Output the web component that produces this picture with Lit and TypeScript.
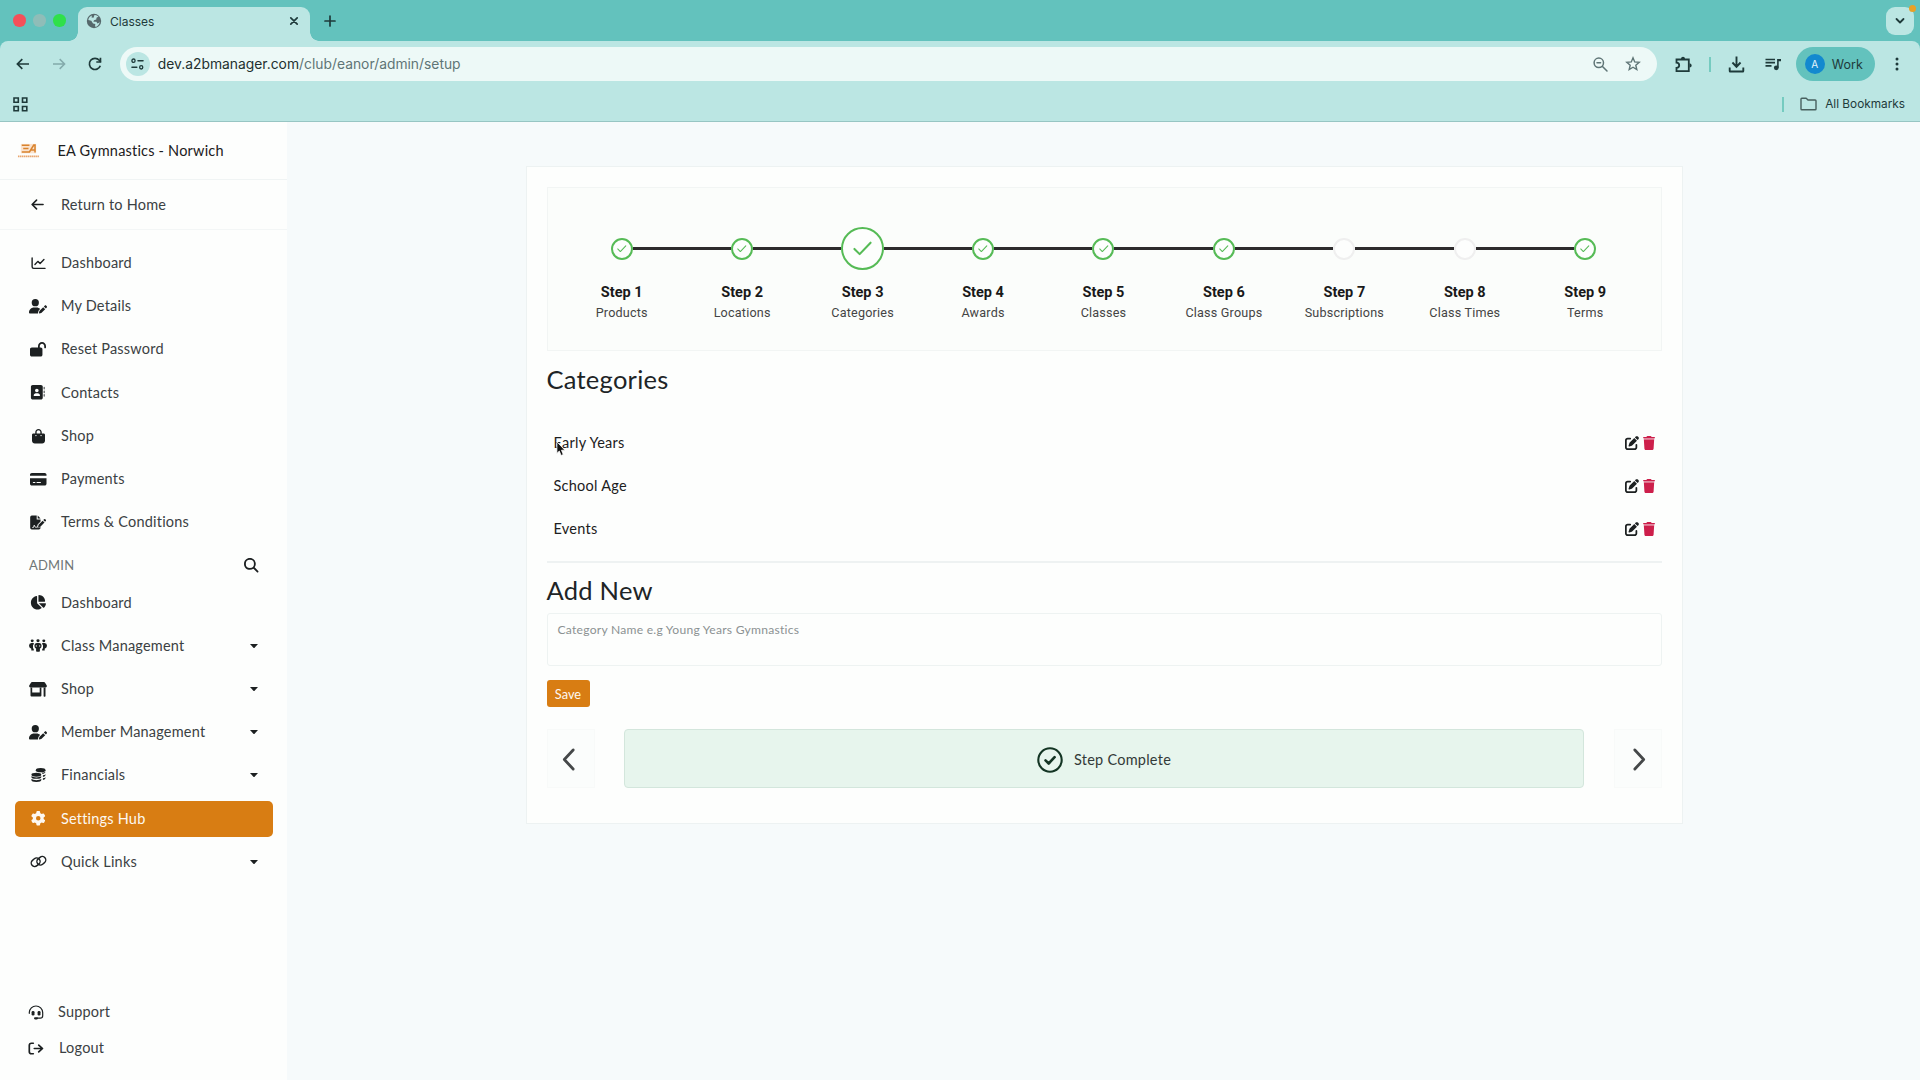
import { LitElement, html, css, svg } from 'lit'
import { customElement } from 'lit/decorators.js'
import { classMap } from 'lit/directives/class-map.js'

const glyphs: Record<string, { box: string; art: unknown }> = {
  chartLine: {
    box: '0 0 16 14',
    art: svg`<path class="s" stroke-width="1.5" d="M1.2 1v9.6q0 1.6 1.6 1.6H15"/><path class="s" stroke-width="1.5" d="M4.2 8 7.3 4.7 9.7 6.9 13.8 2.7"/>`,
  },
  userPen: {
    box: '0 0 640 512',
    art: svg`<path d="M224 256A128 128 0 1 0 224 0a128 128 0 1 0 0 256zm-45.7 48C79.8 304 0 383.8 0 482.3C0 498.7 13.3 512 29.7 512H322.8c-3.1-8.8-3.7-18.4-1.4-27.8l15-60.1c2.8-11.3 8.6-21.5 16.8-29.7l40.3-40.3c-32.1-31-75.7-50.1-123.9-50.1H178.3zm435.5-68.3c-15.6-15.6-40.9-15.6-56.6 0l-29.4 29.4 71 71 29.4-29.4c15.6-15.6 15.6-40.9 0-56.6l-14.4-14.4zM375.9 417c-4.1 4.1-7 9.2-8.4 14.9l-15 60.1c-1.4 5.5 .2 11.2 4.2 15.2s9.7 5.6 15.2 4.2l60.1-15c5.6-1.4 10.8-4.3 14.9-8.4L576.1 358.7l-71-71L375.9 417z"/>`,
  },
  lockOpen: {
    box: '0 0 576 512',
    art: svg`<path d="M352 144c0-44.2 35.8-80 80-80s80 35.8 80 80v48c0 17.7 14.3 32 32 32s32-14.3 32-32V144C576 64.5 511.5 0 432 0S288 64.5 288 144v48H64c-35.3 0-64 28.7-64 64V448c0 35.3 28.7 64 64 64H384c35.3 0 64-28.7 64-64V256c0-35.3-28.7-64-64-64H352V144z"/>`,
  },
  addressBook: {
    box: '0 0 544 512',
    art: svg`<path d="M96 0C60.7 0 32 28.7 32 64V448c0 35.3 28.7 64 64 64H384c35.3 0 64-28.7 64-64V64c0-35.3-28.7-64-64-64H96zM208 288h64c44.2 0 80 35.8 80 80c0 8.8-7.2 16-16 16H144c-8.8 0-16-7.2-16-16c0-44.2 35.8-80 80-80zm-32-96a64 64 0 1 1 128 0 64 64 0 1 1-128 0zM512 80c0-8.8-7.2-16-16-16s-16 7.2-16 16v64c0 8.8 7.2 16 16 16s16-7.2 16-16V80zM496 192c-8.8 0-16 7.2-16 16v64c0 8.8 7.2 16 16 16s16-7.2 16-16V208c0-8.8-7.2-16-16-16zm16 144c0-8.8-7.2-16-16-16s-16 7.2-16 16v64c0 8.8 7.2 16 16 16s16-7.2 16-16V336z"/>`,
  },
  bag: {
    box: '0 0 448 512',
    art: svg`<path d="M160 112c0-35.3 28.7-64 64-64s64 28.7 64 64v48H160V112zm-48 48H48c-26.5 0-48 21.5-48 48V416c0 53 43 96 96 96H352c53 0 96-43 96-96V208c0-26.5-21.5-48-48-48H336V112C336 50.1 285.9 0 224 0S112 50.1 112 112v48zm24 48a24 24 0 1 1 0 48 24 24 0 1 1 0-48zm152 24a24 24 0 1 1 48 0 24 24 0 1 1-48 0z"/>`,
  },
  card: {
    box: '0 0 576 512',
    art: svg`<path d="M64 32C28.7 32 0 60.7 0 96v32H576V96c0-35.3-28.7-64-64-64H64zM576 224H0V416c0 35.3 28.7 64 64 64H512c35.3 0 64-28.7 64-64V224zM112 352h64c8.8 0 16 7.2 16 16s-7.2 16-16 16H112c-8.8 0-16-7.2-16-16s7.2-16 16-16zm112 16c0-8.8 7.2-16 16-16H368c8.8 0 16 7.2 16 16s-7.2 16-16 16H240c-8.8 0-16-7.2-16-16z"/>`,
  },
  fileSign: {
    box: '0 0 18 16',
    art: svg`<path d="M2 .5h5.3v4.2h4.2v2.2L8.3 10.2 7.6 13.3l3.9-.3v.6q0 1.9-1.9 1.9H2Q.2 15.5.2 13.7V2.3Q.2.5 2 .5z"/><path d="M8.4.5 11.5 3.7H8.4z"/><path d="m9.3 10.5 4.5-4.5 2 2-4.5 4.5-2.5.6z"/><path d="m14.5 5.3.8-.8q.7-.7 1.4 0l.5.5q.7.7 0 1.4l-.8.8z"/><path stroke="#fdfefd" stroke-width=".9" fill="none" d="M2.5 13.3h1.3l.8-2.5 1.1 2.2h2"/>`,
  },
  search: {
    box: '0 0 512 512',
    art: svg`<path d="M416 208c0 45.9-14.9 88.3-40 122.7L502.6 457.4c12.5 12.5 12.5 32.8 0 45.3s-32.8 12.5-45.3 0L330.7 376c-34.4 25.2-76.8 40-122.7 40C93.1 416 0 322.9 0 208S93.1 0 208 0S416 93.1 416 208zM208 352a144 144 0 1 0 0-288 144 144 0 1 0 0 288z"/>`,
  },
  pie: {
    box: '0 0 576 512',
    art: svg`<path d="M304 240V16.6c0-9 7-16.6 16-16.6C443.7 0 544 100.3 544 224c0 9-7.6 16-16.6 16H304zM32 272C32 150.7 122.1 50.3 239 34.3c9.2-1.3 17 6.1 17 15.4V288L412.5 444.5c6.7 6.7 6.2 17.7-1.5 23.1C371.8 495.6 323.8 512 272 512C139.5 512 32 404.6 32 272zm526.4 16c9.3 0 16.6 7.8 15.4 17c-7.7 55.9-34.6 105.6-73.9 142.3c-6 5.6-15.4 5.2-21.2-.7L320 288H558.4z"/>`,
  },
  people: {
    box: '0 0 18 14',
    art: svg`<circle cx="3.2" cy="2" r="1.5"/><circle cx="9" cy="2" r="1.6"/><circle cx="14.8" cy="2" r="1.5"/><path d="M2.5 4.3h1.7q.8.1.8.9l-1 1.6v3l.8 1.2v1.5H2.3v-2.1Q0 9.5 0 7.3 0 4.5 2.5 4.3zM15.5 4.3h-1.7q-.8.1-.8.9l1 1.6v3l-.8 1.2v1.5h2.5v-2.1Q18 9.5 18 7.3 18 4.5 15.5 4.3z"/><path d="M7.7 4.3h2.6q2.3.3 2.3 3 0 2-1.7 3.1V13q0 .8-.8.8H7.9q-.8 0-.8-.8v-2.6Q5.4 9.3 5.4 7.3q0-2.7 2.3-3z"/><path stroke="#fdfefd" stroke-width=".7" fill="none" d="M7.3 6.5v2M10.7 6.5v2"/>`,
  },
  store: {
    box: '0 0 18 15',
    art: svg`<path d="M3 0h12q.6 0 .9.5L17.8 3.6Q18.3 5.4 16.5 5.6H1.5Q-.3 5.4.2 3.6L2.1.5Q2.4 0 3 0z"/><path d="M1.5 5.5h1.7v5h7.5v-5h1.7v8q0 1-1 1H2.5q-1 0-1-1zM14.6 5.5h1.9V14q0 .7-.7.7h-.5q-.7 0-.7-.7z"/>`,
  },
  coins: {
    box: '0 0 16 15',
    art: svg`<ellipse cx="10.3" cy="2.2" rx="5.2" ry="2.2"/><path d="M15.5 4q0 1.5-2.8 2.2l-1.5-1.3Q14.3 4.9 15.5 4zM15.5 7.2q0 1.4-2.8 2V7.6q2-.4 2.8-1.2zM15.5 10.3q0 1.4-2.8 2v-1.6q2-.4 2.8-1.2z"/><ellipse cx="5.7" cy="7" rx="5.3" ry="2"/><path d="M.4 8.6q1.7 1.2 5.3 1.2T11 8.6v.7q0 1.9-5.3 1.9T.4 9.3zM.4 11.5q1.7 1.2 5.3 1.2t5.3-1.2v1q0 2-5.3 2t-5.3-2z"/>`,
  },
  gear: {
    box: '0 0 512 512',
    art: svg`<path d="M495.9 166.6c3.2 8.7 .5 18.4-6.4 24.6l-43.3 39.4c1.1 8.3 1.7 16.8 1.7 25.4s-.6 17.1-1.7 25.4l43.3 39.4c6.9 6.2 9.6 15.9 6.4 24.6c-4.4 11.9-9.7 23.3-15.8 34.3l-4.7 8.1c-6.6 11-14 21.4-22.1 31.2c-5.9 7.2-15.7 9.6-24.5 6.8l-55.7-17.7c-13.4 10.3-28.2 18.9-44 25.4l-12.5 57.1c-2 9.1-9 16.3-18.2 17.8c-13.8 2.3-28 3.5-42.5 3.5s-28.7-1.2-42.5-3.5c-9.2-1.5-16.2-8.7-18.2-17.8l-12.5-57.1c-15.8-6.5-30.6-15.1-44-25.4L83.1 425.9c-8.8 2.8-18.6 .3-24.5-6.8c-8.1-9.8-15.5-20.2-22.1-31.2l-4.7-8.1c-6.1-11-11.4-22.4-15.8-34.3c-3.2-8.7-.5-18.4 6.4-24.6l43.3-39.4C64.6 273.1 64 264.6 64 256s.6-17.1 1.7-25.4L22.4 191.2c-6.9-6.2-9.6-15.9-6.4-24.6c4.4-11.9 9.7-23.3 15.8-34.3l4.7-8.1c6.6-11 14-21.4 22.1-31.2c5.9-7.2 15.7-9.6 24.5-6.8l55.7 17.7c13.4-10.3 28.2-18.9 44-25.4l12.5-57.1c2-9.1 9-16.3 18.2-17.8C227.3 1.2 241.5 0 256 0s28.7 1.2 42.5 3.5c9.2 1.5 16.2 8.7 18.2 17.8l12.5 57.1c15.8 6.5 30.6 15.1 44 25.4l55.7-17.7c8.8-2.8 18.6-.3 24.5 6.8c8.1 9.8 15.5 20.2 22.1 31.2l4.7 8.1c6.1 11 11.4 22.4 15.8 34.3zM256 336a80 80 0 1 0 0-160 80 80 0 1 0 0 160z"/>`,
  },
  link: {
    box: '0 0 18 14',
    art: svg`<rect class="s" stroke-width="1.5" x="1" y="4.1" width="10" height="7.4" rx="3.7" transform="rotate(-40 6 7.8)"/><rect class="s" stroke-width="1.5" x="7" y="2.5" width="10" height="7.4" rx="3.7" transform="rotate(-40 12 6.2)"/>`,
  },
  headset: {
    box: '0 0 16 15',
    art: svg`<path class="s" stroke-width="1.2" d="M1.3 8.3V7.5A6.7 6.7 0 0 1 8 1a6.7 6.7 0 0 1 6.7 6.5v3.3q0 2.4-2.4 2.4H9"/><rect x="3.6" y="6" width="2.9" height="4.6" rx="1.3"/><rect x="9.6" y="6" width="2.9" height="4.6" rx="1.3"/><rect x="6" y="12.2" width="4" height="2.2" rx="1.1"/>`,
  },
  logout: {
    box: '0 0 16 14',
    art: svg`<path class="s" stroke-width="1.7" d="M5.3 1.3H3.5Q1.3 1.3 1.3 3.5v7q0 2.2 2.2 2.2h1.8M6.3 7h8M10.7 3.3 14.5 7l-3.8 3.7"/>`,
  },
  arrowLeft: {
    box: '0 0 14 12',
    art: svg`<path class="s" stroke-width="1.7" d="M13 6H1.3M6 1.2 1.2 6 6 10.8"/>`,
  },
  edit: {
    box: '0 0 512 512',
    art: svg`<path d="M471.6 21.7c-21.9-21.9-57.3-21.9-79.2 0L362.3 51.7l97.9 97.9 30.1-30.1c21.9-21.9 21.9-57.3 0-79.2L471.6 21.7zm-299.2 220c-6.1 6.1-10.8 13.6-13.5 21.9l-29.6 88.8c-2.9 8.6-.6 18.1 5.8 24.6s15.9 8.7 24.6 5.8l88.8-29.6c8.2-2.7 15.7-7.4 21.9-13.5L437.7 172.3 339.7 74.3 172.4 241.7zM96 64C43 64 0 107 0 160V416c0 53 43 96 96 96H352c53 0 96-43 96-96V320c0-17.7-14.3-32-32-32s-32 14.3-32 32v96c0 17.7-14.3 32-32 32H96c-17.7 0-32-14.3-32-32V160c0-17.7 14.3-32 32-32h96c17.7 0 32-14.3 32-32s-14.3-32-32-32H96z"/>`,
  },
  trash: {
    box: '0 0 448 512',
    art: svg`<path d="M135.2 17.7L128 32H32C14.3 32 0 46.3 0 64S14.3 80 32 80H416c17.7 0 32 0 32-16s-14.3-32-32-32H320l-7.2-14.3C307.4 6.8 296.3 0 284.2 0H163.8c-12.1 0-23.2 6.8-28.6 17.7z"/><path opacity=".45" d="M28 80H420V130H28z"/><path d="M416 128H32L53.2 467c1.6 25.3 22.6 45 47.9 45H346.9c25.3 0 46.3-19.7 47.9-45L416 128z"/>`,
  },
  check: { box: '0 0 20 16', art: svg`<path class="s" stroke-width="2.2" d="M1.5 8.5 7 14 18.5 1.8"/>` },
  doneCircle: {
    box: '0 0 26 26',
    art: svg`<circle class="s" stroke-width="2.1" cx="13" cy="13" r="11.7"/><path class="s" stroke-width="2.6" d="m8.5 13.3 3.2 3.2 5.9-6.3"/>`,
  },
  chevronLeft: { box: '0 0 14 24', art: svg`<path class="s" stroke-width="3" d="M12 2 2.5 12 12 22"/>` },
  chevronRight: { box: '0 0 14 24', art: svg`<path class="s" stroke-width="3" d="M2 2 11.5 12 2 22"/>` },
  chevronDown: { box: '0 0 10 6', art: svg`<path class="s" stroke-width="1.8" d="M1.5 1 5 4.5 8.5 1"/>` },
  caret: { box: '0 0 8 4', art: svg`<path d="M0 0h8L4.6 3.7q-.6.5-1.2 0z"/>` },
  globe: {
    box: '0 0 16 16',
    art: svg`<circle cx="8" cy="8" r="7.2"/><path fill="#bbe6e3" d="M8.5 2.1q2.3-.2 4 1.5L10.5 4.7 10.3 6.6 8 7.2 7.4 8.8h3l1 1.8q2-.4 2.3-2-.2 3.6-3.4 5.1l-1.3-.2.3-2.5L7 10.5 5.3 7.7 2.3 7Q2.7 3.5 6 2.4l-.5 2 2 .3z"/>`,
  },
  close: { box: '0 0 10 10', art: svg`<path class="s" stroke-width="1.7" d="m1.8 1.8 6.4 6.4M8.2 1.8 1.8 8.2"/>` },
  plus: { box: '0 0 12 12', art: svg`<path class="s" stroke-width="1.7" d="M6 1v10M1 6h10"/>` },
  back: { box: '0 0 14 12', art: svg`<path class="s sq" stroke-width="1.7" d="M13 6H1.6M6.3 1.1 1.4 6l4.9 4.9"/>` },
  forward: { box: '0 0 14 12', art: svg`<path class="s sq" stroke-width="1.5" d="M1 6h11.4M7.7 1.1 12.6 6l-4.9 4.9"/>` },
  reload: {
    box: '0 0 14 14',
    art: svg`<path class="s sq" stroke-width="1.7" d="M12.3 8.7A5.6 5.6 0 1 1 11.3 3.3L12.7 4.9"/><path d="M13.3.8v5H8.3V4.2h3.3V.8z"/>`,
  },
  tune: {
    box: '0 0 14 12',
    art: svg`<circle class="s" stroke-width="1.4" cx="2.7" cy="2.7" r="1.7"/><path class="s" stroke-width="1.5" d="M7.5 2.7h5.5M1 9.3h5.3"/><circle class="s" stroke-width="1.4" cx="11" cy="9.3" r="1.7"/>`,
  },
  apps: {
    box: '0 0 15 15',
    art: svg`<path class="s sq" stroke-width="1.6" d="M1 1h4.3v4.3H1zM9.5 1h4.3v4.3H9.5zM1 9.5h4.3v4.3H1zM9.5 9.5h4.3v4.3H9.5z"/>`,
  },
  zoomOut: {
    box: '0 0 15 15',
    art: svg`<circle class="s" stroke-width="1.5" cx="5.8" cy="5.8" r="4.7"/><path class="s" stroke-width="1.5" d="m9.5 9.5 4.5 4.5M4 5.8h3.6"/>`,
  },
  star: {
    box: '0 0 16 16',
    art: svg`<path class="s sq" stroke-width="1.4" d="m8 1.8 1.7 4.1 4.5.4-3.4 2.9 1 4.3L8 11.2l-3.8 2.3 1-4.3L1.8 6.3l4.5-.4z"/>`,
  },
  puzzle: {
    box: '0 0 18 17',
    art: svg`<path class="s sq" stroke-width="1.8" d="M1.5 3.5h12.3v11.7H1.5v-3.4Q4.2 11.5 4.2 9.2T1.5 6.6z"/><path d="M5.9 3Q6.1.8 8 .8T10.1 3zM14.5 7.2q2.2.2 2.2 2.2t-2.2 2.2z"/>`,
  },
  download: {
    box: '0 0 18 17',
    art: svg`<path class="s sq" stroke-width="2" d="M9 .5v9.7M4.7 6.5 9 10.8l4.3-4.3M1.8 11.5V15q0 .5.5.5h13.4q.5 0 .5-.5v-3.5"/>`,
  },
  playlist: {
    box: '0 0 17 13',
    art: svg`<path class="s sq" stroke-width="1.7" d="M.5 1.5h9.5M.5 4.7h9.5M.5 7.9h6"/><circle cx="11.3" cy="9.8" r="2.4"/><path d="M12.1 1h3.9v2.2h-2.3v6.6h-1.6z"/>`,
  },
  dots: { box: '0 0 4 14', art: svg`<circle cx="2" cy="2" r="1.5"/><circle cx="2" cy="7" r="1.5"/><circle cx="2" cy="12" r="1.5"/>` },
  folder: {
    box: '0 0 17 14',
    art: svg`<path class="s" stroke-width="1.4" d="M1.8 1.2h4.4L8 3h7.2q.8 0 .8.8v8.1q0 .8-.8.8H1.8q-.8 0-.8-.8V2q0-.8.8-.8z"/>`,
  },
  pointer: {
    box: '0 0 12 17',
    art: svg`<path fill="#111" stroke="#fff" stroke-width=".9" d="M1 .8v12.4l2.8-2.5 2 4.7 2.5-1-2-4.6h3.9z"/>`,
  },
  clubLogo: {
    box: '0 0 24 18',
    art: svg`<path fill="#fbe3cd" d="M4 2h16v10H4z"/><path fill="none" stroke="#d9842f" stroke-width="1.6" d="M5 3.5h8M6.5 7H12M5 10.6h8L17.5 3.3h1.3V11M15 8.5h3.5"/><path stroke="#e9a56d" stroke-width="1.7" stroke-dasharray="1.6 .5" d="M1 15.2h22"/>`,
  },
}

const icon = (name: string, w: number, h: number) =>
  html`<svg width=${w} height=${h} viewBox=${glyphs[name].box} preserveAspectRatio="none" aria-hidden="true">${glyphs[name].art}</svg>`

const shared = css`
  :host,
  * {
    box-sizing: border-box;
  }

  svg {
    display: block;
    flex: none;
    fill: currentColor;
    overflow: visible;
  }

  .s {
    fill: none;
    stroke: currentColor;
    stroke-linecap: round;
    stroke-linejoin: round;
  }

  .sq {
    stroke-linecap: butt;
    stroke-linejoin: miter;
  }
`

@customElement('browser-frame')
class BrowserFrame extends LitElement {
  static styles = [
    shared,
    css`
      :host {
        display: block;
        height: 122px;
        background: #63c2bd;
        border-bottom: 1px solid #97c5c3;
        color: #1e3a3a;
        font-family: Inter, sans-serif;
      }

      .strip {
        display: flex;
        height: 41px;
        padding: 0 6px 0 13px;
      }

      .lights {
        display: flex;
        align-items: center;
        gap: 7.6px;
        width: 65px;
      }

      .light {
        width: 12.5px;
        height: 12.5px;
        border-radius: 50%;
        background: #f4505a;
      }

      .light.idle {
        background: #8fbdb8;
      }

      .light.go {
        background: #2fe04a;
      }

      .tab {
        position: relative;
        display: flex;
        align-items: center;
        width: 232px;
        height: 34px;
        margin-top: 7px;
        padding: 0 11px 6px 8px;
        border-radius: 9px 9px 0 0;
        background: #bbe6e3;
        font-size: 12px;
      }

      .tab::before,
      .tab::after {
        content: '';
        position: absolute;
        bottom: 0;
        width: 9px;
        height: 9px;
      }

      .tab::before {
        left: -9px;
        background: radial-gradient(circle at 0 0, transparent 8.5px, #bbe6e3 9px);
      }

      .tab::after {
        right: -9px;
        background: radial-gradient(circle at 100% 0, transparent 8.5px, #bbe6e3 9px);
      }

      .favicon {
        color: #56696c;
      }

      .tab-title {
        flex: 1;
        margin-left: 8px;
      }

      .new-tab {
        display: flex;
        align-items: center;
        margin: 0 auto 0 14px;
      }

      .tab-search {
        position: relative;
        display: grid;
        place-items: center;
        width: 28px;
        height: 28px;
        margin-top: 7px;
        border-radius: 9px;
        background: #bbe6e3;
      }

      .tab-search::after {
        content: '';
        position: absolute;
        top: -2px;
        right: -2px;
        width: 7px;
        height: 7px;
        border-radius: 50%;
        background: #e9a126;
      }

      .tools {
        display: flex;
        align-items: center;
        height: 46px;
        padding: 0 21px 0 16px;
        border-radius: 8px 8px 0 0;
        background: #bbe6e3;
      }

      .nav {
        display: flex;
        align-items: center;
        width: 105px;
        gap: 22px;
      }

      .off {
        color: #83aaab;
      }

      .address {
        display: flex;
        align-items: center;
        flex: none;
        width: 1537px;
        height: 34px;
        padding: 0 16px 0 5px;
        border-radius: 17px;
        background: #edf9f7;
        color: #5f7576;
      }

      .info {
        display: grid;
        place-items: center;
        width: 24px;
        height: 24px;
        margin-left: 1px;
        border-radius: 50%;
        background: #bbe6e3;
        color: #1e3a3a;
      }

      .url {
        flex: 1;
        margin-left: 8px;
        font-size: 13.85px;
        line-height: 20px;
      }

      .host {
        color: #22302f;
      }

      .address .star {
        margin-left: 17px;
      }

      .ext {
        margin-left: 18px;
      }

      .divider {
        width: 2px;
        height: 15px;
        background: #75cbc0;
      }

      .ext + .divider {
        margin: 0 17px 0 16px;
      }

      .list {
        margin: 0 14px 0 20px;
      }

      .profile {
        display: flex;
        align-items: center;
        gap: 7px;
        width: 80px;
        height: 34px;
        padding-left: 9px;
        margin-right: 20px;
        border-radius: 17px;
        background: #63c2bd;
        font-size: 12.5px;
      }

      .avatar {
        width: 20px;
        border-radius: 50%;
        background: #1389cf;
        color: #e6f5fb;
        font-size: 10px;
        line-height: 20px;
        text-align: center;
      }

      .marks {
        display: flex;
        align-items: center;
        height: 34px;
        padding: 0 15px 0 12.5px;
        background: #bbe6e3;
        font-size: 11.8px;
      }

      .marks .divider {
        margin: 0 16px 0 auto;
      }

      .folder {
        margin-right: 8px;
        color: #48605f;
      }
    `,
  ]

  render() {
    return html`
      <div class="strip">
        <div class="lights">
          <span class="light"></span>
          <span class="light idle"></span>
          <span class="light go"></span>
        </div>
        <div class="tab">
          <span class="favicon">${icon('globe', 16, 16)}</span>
          <span class="tab-title">Classes</span>
          ${icon('close', 10, 10)}
        </div>
        <div class="new-tab">${icon('plus', 12, 12)}</div>
        <div class="tab-search">${icon('chevronDown', 10, 6)}</div>
      </div>
      <div class="tools">
        <div class="nav">
          ${icon('back', 14, 12)}
          <span class="off">${icon('forward', 14, 12)}</span>
          ${icon('reload', 14, 14)}
        </div>
        <div class="address">
          <span class="info">${icon('tune', 13, 12)}</span>
          <span class="url"><span class="host">dev.a2bmanager.com</span>/club/eanor/admin/setup</span>
          ${icon('zoomOut', 15, 15)}
          <span class="star">${icon('star', 16, 16)}</span>
        </div>
        <span class="ext">${icon('puzzle', 18, 17)}</span>
        <span class="divider"></span>
        ${icon('download', 17, 17)}
        <span class="list">${icon('playlist', 17, 13)}</span>
        <div class="profile"><span class="avatar">A</span>Work</div>
        ${icon('dots', 4, 14)}
      </div>
      <div class="marks">
        ${icon('apps', 15, 15)}
        <span class="divider"></span>
        <span class="folder">${icon('folder', 17, 14)}</span>
        All Bookmarks
      </div>
    `
  }
}

interface NavItem {
  label: string
  glyph: string
  size: [number, number]
  menu?: boolean
  active?: boolean
}

const memberLinks: NavItem[] = [
  { label: 'Dashboard', glyph: 'chartLine', size: [15, 13] },
  { label: 'My Details', glyph: 'userPen', size: [18, 14.5] },
  { label: 'Reset Password', glyph: 'lockOpen', size: [16, 14.5] },
  { label: 'Contacts', glyph: 'addressBook', size: [15.5, 14.5] },
  { label: 'Shop', glyph: 'bag', size: [13, 14.5] },
  { label: 'Payments', glyph: 'card', size: [16.5, 14.5] },
  { label: 'Terms & Conditions', glyph: 'fileSign', size: [16.5, 15] },
]

const adminLinks: NavItem[] = [
  { label: 'Dashboard', glyph: 'pie', size: [16, 14.5] },
  { label: 'Class Management', glyph: 'people', size: [18, 13], menu: true },
  { label: 'Shop', glyph: 'store', size: [18, 15], menu: true },
  { label: 'Member Management', glyph: 'userPen', size: [18, 14.5], menu: true },
  { label: 'Financials', glyph: 'coins', size: [15, 14.5], menu: true },
  { label: 'Settings Hub', glyph: 'gear', size: [14.5, 14.5], active: true },
  { label: 'Quick Links', glyph: 'link', size: [17, 13], menu: true },
]

@customElement('side-nav')
class SideNav extends LitElement {
  static styles = [
    shared,
    css`
      :host {
        display: flex;
        flex-direction: column;
        width: 287px;
        background: #fdfefd;
        color: #1c2021;
        font: 14.5px/20px Lato, sans-serif;
        letter-spacing: 0.2px;
      }

      .club {
        display: flex;
        align-items: center;
        gap: 17.5px;
        height: 58px;
        padding-left: 17px;
        border-bottom: 1px solid #f0f4f4;
      }

      .home {
        display: flex;
        align-items: center;
        gap: 17px;
        height: 50px;
        padding-left: 31px;
        border-bottom: 1px solid #f3f6f6;
      }

      .label {
        color: #3b4143;
      }

      .links {
        padding: 15px 14px 0 15px;
      }

      .item {
        display: flex;
        align-items: center;
        height: 36px;
        margin-bottom: 7.2px;
        padding: 0 15px 0 14px;
        border-radius: 5px;
      }

      .item .label {
        flex: 1;
      }

      .slot {
        display: flex;
        justify-content: center;
        width: 18px;
        margin-right: 14px;
      }

      .active {
        background: #d87d13;
        color: #fdf8f1;
      }

      .active .label {
        color: inherit;
      }

      .group {
        display: flex;
        align-items: center;
        justify-content: space-between;
        height: 37.4px;
        padding: 0 15px 2px 14px;
        color: #6f7677;
        font-size: 13px;
      }

      .group svg {
        color: #1c2021;
      }

      .footer {
        display: flex;
        flex-direction: column;
        margin-top: auto;
        padding: 0 0 14px 28px;
      }

      .footer .row {
        display: flex;
        align-items: center;
        height: 36px;
        gap: 14px;
      }

      .footer .row + .row .label {
        margin-left: 1px;
      }
    `,
  ]

  private renderItem(item: NavItem) {
    return html`
      <div class=${classMap({ item: true, active: !!item.active })}>
        <span class="slot">${icon(item.glyph, ...item.size)}</span>
        <span class="label">${item.label}</span>
        ${item.menu ? icon('caret', 8, 4) : ''}
      </div>
    `
  }

  render() {
    return html`
      <div class="club">${icon('clubLogo', 23, 17)}<span>EA Gymnastics - Norwich</span></div>
      <div class="home">${icon('arrowLeft', 13, 11)}<span class="label">Return to Home</span></div>
      <div class="links">
        ${memberLinks.map((item) => this.renderItem(item))}
        <div class="group"><span>ADMIN</span>${icon('search', 14.5, 14.5)}</div>
        ${adminLinks.map((item) => this.renderItem(item))}
      </div>
      <div class="footer">
        <div class="row">${icon('headset', 16, 15)}<span class="label">Support</span></div>
        <div class="row">${icon('logout', 16, 13)}<span class="label">Logout</span></div>
      </div>
    `
  }
}

interface Step {
  label: string
  done: boolean
  current?: boolean
}

const steps: Step[] = [
  { label: 'Products', done: true },
  { label: 'Locations', done: true },
  { label: 'Categories', done: true, current: true },
  { label: 'Awards', done: true },
  { label: 'Classes', done: true },
  { label: 'Class Groups', done: true },
  { label: 'Subscriptions', done: false },
  { label: 'Class Times', done: false },
  { label: 'Terms', done: true },
]

@customElement('step-track')
class StepTrack extends LitElement {
  static styles = [
    shared,
    css`
      :host {
        display: flex;
        height: 164px;
        padding: 39px 15px 0 14px;
        border: 1px solid #f2f5f4;
        background: #fbfdfb;
        font-family: Roboto, sans-serif;
        letter-spacing: 0;
        text-align: center;
      }

      .step {
        flex: 1;
      }

      .rail {
        display: flex;
        align-items: center;
        height: 43px;
      }

      .line {
        flex: 1;
        height: 3px;
        background: #2d2b2c;
      }

      .step:first-child .line:first-child,
      .step:last-child .line:last-child {
        background: transparent;
      }

      .dot {
        display: grid;
        place-items: center;
        width: 22px;
        height: 22px;
        border: 2px solid #efefef;
        border-radius: 50%;
        background: #fdfefd;
        color: #56bb56;
      }

      .done {
        border-color: #56bb56;
      }

      .current {
        width: 43px;
        height: 43px;
      }

      .name {
        margin-top: 14px;
        color: #191919;
        font-size: 14.5px;
        font-weight: 700;
        line-height: 18px;
      }

      .label {
        margin-top: 2px;
        color: #444;
        font-size: 12.6px;
        line-height: 18px;
        letter-spacing: 0.2px;
      }
    `,
  ]

  render() {
    return steps.map(
      (step, i) => html`
        <div class="step">
          <div class="rail">
            <span class="line"></span>
            <span class=${classMap({ dot: true, done: step.done, current: !!step.current })}>
              ${step.done ? (step.current ? icon('check', 19, 15) : icon('check', 9.5, 7.5)) : ''}
            </span>
            <span class="line"></span>
          </div>
          <div class="name">Step ${i + 1}</div>
          <div class="label">${step.label}</div>
        </div>
      `,
    )
  }
}

@customElement('setup-card')
class SetupCard extends LitElement {
  static styles = [
    shared,
    css`
      :host {
        display: block;
        width: 1157px;
        height: 658px;
        padding: 20px 20.5px 0 19.5px;
        border: 1px solid #edf2f2;
        background: #fdfefd;
        color: #1c2021;
        font: 14.5px/20px Lato, sans-serif;
        letter-spacing: 0.25px;
      }

      h2 {
        margin: 0;
        color: #202426;
        font-size: 25.5px;
        font-weight: 400;
        line-height: 32px;
      }

      .title {
        margin-top: 12px;
      }

      .rows {
        padding: 26px 7px 11px;
        border-bottom: 2px solid #eef2f2;
      }

      .row {
        position: relative;
        display: flex;
        align-items: center;
        height: 43px;
      }

      .row .name {
        flex: 1;
      }

      .row .trash {
        margin-left: 4px;
        color: #cd1f4b;
      }

      .pointer {
        position: absolute;
        top: 20px;
        left: 2px;
      }

      .add {
        margin-top: 11px;
      }

      .field {
        height: 53px;
        margin-top: 7px;
        padding: 6px 10px;
        border: 1px solid #eef3f2;
        border-radius: 3px;
        color: #8b9192;
        font-size: 12.1px;
      }

      .save {
        display: block;
        width: 43px;
        height: 27px;
        margin-top: 14px;
        padding: 0;
        border: 0;
        border-radius: 3px;
        background: #d87d13;
        color: #fdf8f1;
        font: inherit;
        font-size: 12.8px;
      }

      .pager {
        display: flex;
        justify-content: space-between;
        margin-top: 22px;
      }

      .page {
        display: grid;
        place-items: center;
        width: 48px;
        height: 59px;
        padding: 2px 4px 0 0;
        border: 1px solid #f8faf9;
        background: #fbfdfc;
        color: #454849;
      }

      .page.next {
        padding: 2px 0 0 4px;
      }

      .status {
        display: flex;
        align-items: center;
        justify-content: center;
        gap: 11px;
        width: 960px;
        height: 59px;
        padding-top: 3px;
        border: 1px solid #d3e6dc;
        border-radius: 4px;
        background: #e7f5ed;
        color: #333a38;
      }

      .status svg {
        color: #143524;
      }
    `,
  ]

  render() {
    return html`
      <step-track></step-track>
      <h2 class="title">Categories</h2>
      <div class="rows">
        ${['Early Years', 'School Age', 'Events'].map(
          (name, i) => html`
            <div class="row">
              <span class="name">${name}</span>
              ${icon('edit', 14, 14)}
              <span class="trash">${icon('trash', 12, 14)}</span>
              ${i === 0 ? html`<span class="pointer">${icon('pointer', 10.5, 16)}</span>` : ''}
            </div>
          `,
        )}
      </div>
      <h2 class="add">Add New</h2>
      <div class="field">Category Name e.g Young Years Gymnastics</div>
      <button class="save">Save</button>
      <div class="pager">
        <div class="page">${icon('chevronLeft', 13, 23)}</div>
        <div class="status">${icon('doneCircle', 26, 26)}<span>Step Complete</span></div>
        <div class="page next">${icon('chevronRight', 13, 23)}</div>
      </div>
    `
  }
}

@customElement('app-root')
class AppRoot extends LitElement {
  static styles = css`
    :host {
      display: flex;
      flex-direction: column;
      height: 1080px;
      overflow: hidden;
      background: #f6fafb;
    }

    .page {
      display: flex;
      flex: 1;
      min-height: 0;
    }

    main {
      flex: 1;
      padding: 44px 0 0 239px;
    }
  `

  render() {
    return html`
      <browser-frame></browser-frame>
      <div class="page">
        <side-nav></side-nav>
        <main><setup-card></setup-card></main>
      </div>
    `
  }
}
